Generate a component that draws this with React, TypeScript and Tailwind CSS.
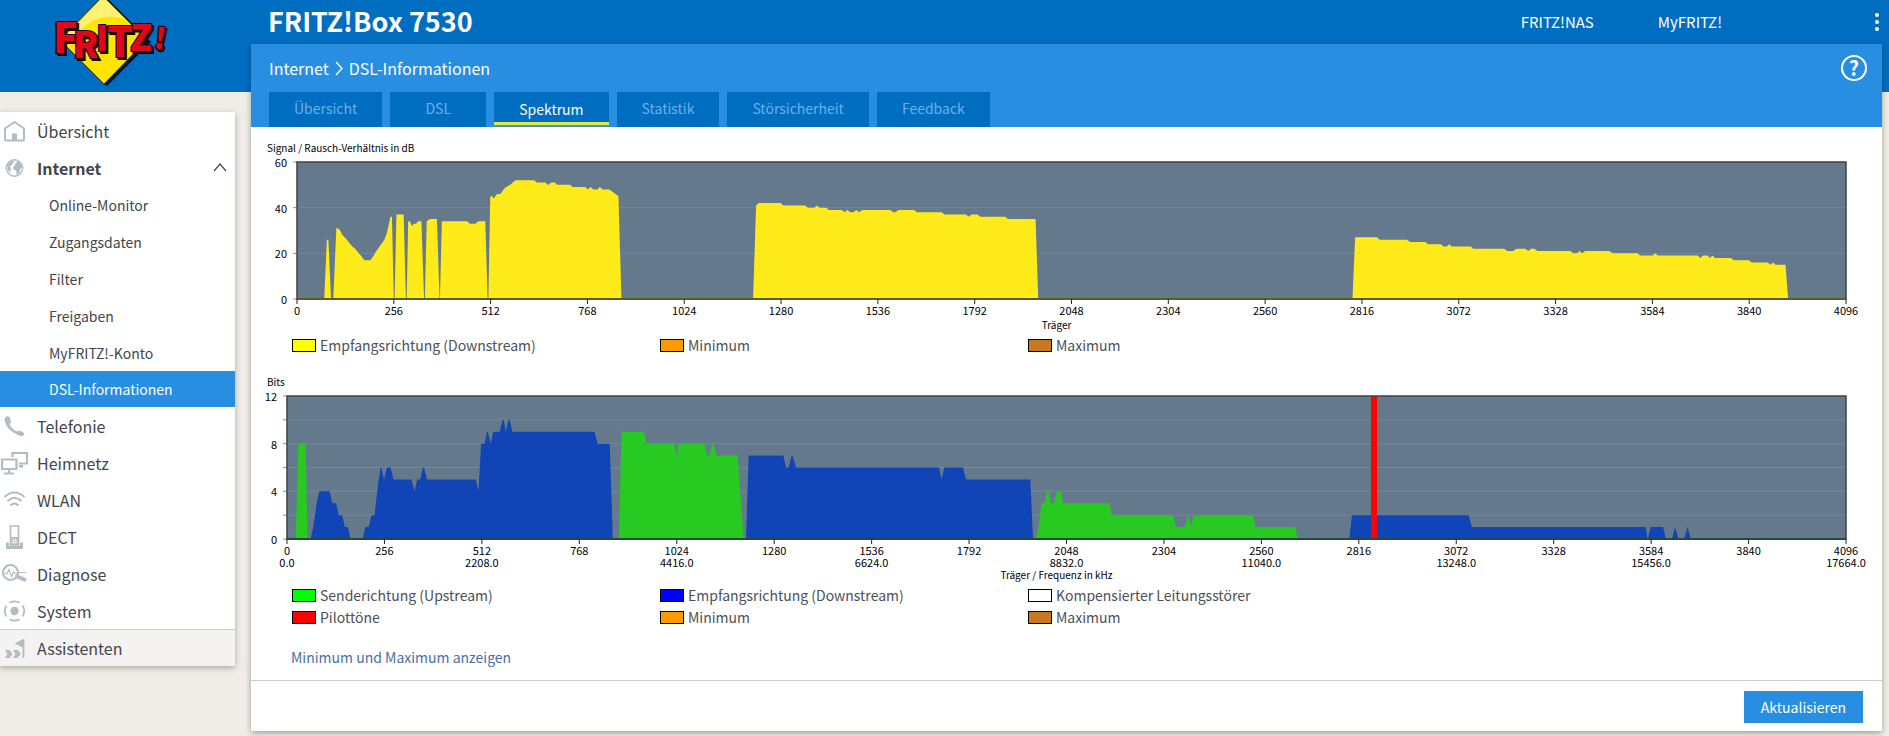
import type { ReactNode } from "react";
import { clsx } from "clsx";

type Point = [carrier: number, value: number];
type Series = { color: string; points: Point[] };
type LegendItem = { label: string; color: string };

const MAX_CARRIER = 4096;

const snr: Series[] = [
  {
    color: "#ffeb1a",
    points: [
      [72, 0], [79, 26], [83, 26], [90, 0], [96, 0], [104, 31], [108, 31], [114, 30], [120, 28], [132, 26],
      [146, 23], [154, 22], [163, 20], [169, 19], [178, 17], [194, 17], [203, 19], [210, 21], [231, 26],
      [238, 29], [247, 36], [251, 36], [256, 0], [258, 0], [263, 37], [282, 37], [288, 0], [290, 0],
      [294, 34], [298, 34], [304, 32], [309, 33], [315, 33], [320, 34], [329, 34], [336, 0], [338, 0],
      [343, 34], [352, 35], [370, 35], [377, 0], [378, 0], [383, 34], [450, 34], [457, 33], [472, 33],
      [479, 34], [498, 34], [504, 0], [506, 0], [511, 45], [516, 45], [520, 44], [529, 46], [538, 46],
      [546, 48], [553, 49], [564, 50], [577, 52], [627, 52], [634, 51], [657, 51], [663, 50], [666, 50],
      [672, 51], [681, 51], [688, 50], [722, 50], [729, 49], [762, 49], [769, 48], [776, 49], [784, 48],
      [794, 48], [801, 49], [808, 48], [826, 48], [850, 45], [858, 0],
    ],
  },
  {
    color: "#ffeb1a",
    points: [
      [1206, 0], [1214, 41], [1221, 42], [1279, 42], [1286, 41], [1344, 41], [1351, 40], [1368, 40],
      [1375, 41], [1382, 40], [1400, 40], [1406, 39], [1441, 39], [1448, 38], [1455, 39], [1463, 38],
      [1471, 38], [1479, 39], [1486, 38], [1495, 39], [1569, 39], [1576, 38], [1583, 38], [1590, 39],
      [1632, 39], [1639, 38], [1705, 38], [1712, 37], [1769, 37], [1776, 36], [1783, 37], [1800, 37],
      [1806, 36], [1873, 36], [1880, 35], [1953, 35], [1960, 0],
    ],
  },
  {
    color: "#ffeb1a",
    points: [
      [2791, 0], [2798, 27], [2856, 27], [2863, 26], [2935, 26], [2943, 25], [2984, 25], [2991, 24],
      [3025, 24], [3031, 23], [3040, 23], [3047, 24], [3053, 23], [3104, 23], [3110, 22], [3192, 22],
      [3200, 21], [3216, 21], [3224, 22], [3248, 22], [3256, 21], [3263, 22], [3272, 22], [3280, 21],
      [3367, 21], [3375, 20], [3385, 20], [3391, 21], [3398, 20], [3407, 21], [3470, 21], [3479, 20],
      [3545, 20], [3551, 19], [3585, 19], [3592, 20], [3598, 19], [3704, 19], [3711, 18], [3718, 19],
      [3730, 19], [3736, 18], [3743, 19], [3750, 18], [3792, 18], [3799, 17], [3839, 17], [3847, 16],
      [3889, 16], [3896, 15], [3903, 16], [3909, 15], [3936, 15], [3943, 0],
    ],
  },
];

const upstream = "#28ca22";
const downstream = "#1044b7";

const bits: Series[] = [
  { color: upstream, points: [[23, 0], [30, 8], [49, 8], [54, 0]] },
  {
    color: downstream,
    points: [
      [62, 0], [69, 1], [78, 3], [85, 4], [112, 4], [119, 3], [129, 3], [136, 2], [145, 2], [152, 1],
      [160, 1], [167, 0], [199, 0], [206, 1], [215, 1], [222, 2], [230, 2], [239, 4.5], [246, 6], [248, 6],
      [255, 5], [262, 6], [272, 6], [280, 5], [327, 5], [335, 4], [342, 5], [350, 5], [357, 6], [360, 6],
      [368, 5], [496, 5], [503, 4], [510, 8], [519, 8], [526, 9], [528, 9], [535, 8], [542, 9], [559, 9],
      [566, 10], [569, 10], [575, 9], [582, 10], [585, 10], [592, 9], [808, 9], [816, 8], [848, 8], [856, 0],
    ],
  },
  {
    color: upstream,
    points: [
      [872, 0], [879, 9], [937, 9], [945, 8], [1018, 8], [1023, 7], [1029, 8], [1097, 8], [1104, 7],
      [1111, 7], [1117, 8], [1121, 8], [1128, 7], [1184, 7], [1200, 0],
    ],
  },
  {
    color: downstream,
    points: [
      [1206, 0], [1213, 7], [1304, 7], [1311, 6], [1318, 6], [1326, 7], [1328, 7], [1337, 6], [1713, 6],
      [1720, 5], [1727, 6], [1776, 6], [1784, 5], [1953, 5], [1960, 0],
    ],
  },
  {
    color: upstream,
    points: [
      [1967, 0], [1975, 1], [1982, 3], [1990, 3], [1997, 4], [2001, 4], [2008, 3], [2014, 3], [2023, 4],
      [2032, 4], [2040, 3], [2161, 3], [2168, 2], [2329, 2], [2336, 1], [2358, 1], [2368, 2], [2376, 1],
      [2382, 2], [2538, 2], [2545, 1], [2649, 1], [2656, 0],
    ],
  },
  {
    color: downstream,
    points: [
      [2791, 0], [2798, 2], [3105, 2], [3113, 1], [3569, 1], [3575, 0], [3583, 1], [3615, 1], [3623, 0],
      [3639, 0], [3647, 1], [3656, 0], [3671, 0], [3680, 1], [3688, 0],
    ],
  },
];

const snrLegend: LegendItem[] = [
  { label: "Empfangsrichtung (Downstream)", color: "bg-[#ffff00]" },
  { label: "Minimum", color: "bg-[#ff9900]" },
  { label: "Maximum", color: "bg-[#c8781e]" },
];

const bitsLegend: LegendItem[] = [
  { label: "Senderichtung (Upstream)", color: "bg-[#00ff00]" },
  { label: "Empfangsrichtung (Downstream)", color: "bg-[#0000ff]" },
  { label: "Kompensierter Leitungsstörer", color: "bg-white" },
  { label: "Pilottöne", color: "bg-[#ff0000]" },
  { label: "Minimum", color: "bg-[#ff9900]" },
  { label: "Maximum", color: "bg-[#c8781e]" },
];

const tabs = ["Übersicht", "DSL", "Spektrum", "Statistik", "Störsicherheit", "Feedback"];

function MenuIcon({ children }: { children: ReactNode }) {
  return (
    <svg
      viewBox="0 0 28 24"
      className="h-6 w-7 shrink-0 fill-none stroke-[#b1bdc3] stroke-2"
      aria-hidden="true"
    >
      {children}
    </svg>
  );
}

const solid = "fill-[#b1bdc3] stroke-none";

const icons = {
  home: (
    <MenuIcon>
      <path d="M5 9.5 14.500 3 24 9.500V20q0 1.500-1.500 1.500H6.500Q5 21.500 5 20Z" strokeLinejoin="round" />
      <path d="M12 22v-7.500h5V22Z" className={solid} />
    </MenuIcon>
  ),
  globe: (
    <MenuIcon>
      <circle cx="14.500" cy="12" r="8.200" strokeWidth="1.500" />
      <path
        d="M7.500 9Q9.500 5.500 13 4.800L14.500 6 12.500 7.500 11.500 9.500 9.500 10 11 12 10.500 14.500 9.500 16.500Q6.800 13 7.500 9ZM16 6.500l2.500-1.500 2.500 3 1 3.500-1.500 1-1 4-2 2.500-1-.5-.3-4-2.400-.8-.8-2.200 1.800-2Z"
        className={solid}
      />
    </MenuIcon>
  ),
  phone: (
    <MenuIcon>
      <path
        d="M6.500 2.500Q9.500 1.500 10.500 5.500T9.500 10Q11.500 14.500 16.500 17.500 18 16 21.500 17.500T24 20.500Q22.500 23 19 21.500 6 16 4.500 6 4.500 3.500 6.500 2.500Z"
        className={solid}
      />
    </MenuIcon>
  ),
  network: (
    <MenuIcon>
      <path d="M12.500 6V2h14.500v10.500h-8" strokeWidth="2.200" />
      <path d="M2 8.500h14.500V18H2ZM9 18v4M4 22.500h10" strokeWidth="2.200" />
      <path d="M19 14h4v2.500h-4Z" className={solid} />
    </MenuIcon>
  ),
  wifi: (
    <MenuIcon>
      <path d="M4.500 9Q14.500 0 24.500 9M7.500 13Q14.500 6.500 21.500 13M10.500 17.500Q14.500 13.500 18.500 17.500" />
    </MenuIcon>
  ),
  dect: (
    <MenuIcon>
      <path d="M10.500 1h8v20h-8Z" strokeWidth="1.600" />
      <path d="M11 12h7v8h-7Z" className={solid} />
      <path d="M13.300 13v6M15.700 13v6M11.500 15.500h6M11.500 17.500h6" className="stroke-white" strokeWidth=".6" />
      <path d="M6 17.500h3V21h11v-3.500h3V24H6Z" className={solid} />
    </MenuIcon>
  ),
  diagnose: (
    <MenuIcon>
      <circle cx="10.500" cy="10.500" r="7.500" />
      <path d="M4.500 11.500h2.500l2-4 2.500 7 2-4.500 1.500 1.500h4M19 10.500h7" strokeWidth="1.200" />
      <path d="m17 14.500 7.500 3" strokeWidth="4" strokeLinecap="round" />
    </MenuIcon>
  ),
  system: (
    <MenuIcon>
      <circle cx="14.500" cy="12" r="4.200" className={solid} />
      <path
        d="M9.500 3.800Q14.500 1 19.500 3.800M9.500 20.200Q14.500 23 19.500 20.200M6.500 6.500Q3 12 6.500 17.500M22.500 6.500Q26 12 22.500 17.500"
        strokeWidth="1.800"
      />
    </MenuIcon>
  ),
  assist: (
    <MenuIcon>
      <path
        d="M5 14h4.500l3 4-3 4H5l2.500-4ZM13 14h4.500l3.500 4-3.500 4H13l2.500-4ZM22.500 3h1.800v19h-1.800ZM23 3v8.500L14.500 7.500Z"
        className={solid}
      />
    </MenuIcon>
  ),
};

const subPages = ["Online-Monitor", "Zugangsdaten", "Filter", "Freigaben", "MyFRITZ!-Konto", "DSL-Informationen"];

const lowerMenu = [
  { label: "Telefonie", icon: icons.phone },
  { label: "Heimnetz", icon: icons.network },
  { label: "WLAN", icon: icons.wifi },
  { label: "DECT", icon: icons.dect },
  { label: "Diagnose", icon: icons.diagnose },
  { label: "System", icon: icons.system },
];

const logoLetters = [
  { char: "F", x: 53, y: 53, size: 41 },
  { char: "R", x: 73, y: 58, size: 36 },
  { char: "I", x: 96, y: 51, size: 35 },
  { char: "T", x: 107, y: 57, size: 41 },
  { char: "Z", x: 130, y: 51, size: 36 },
  { char: "!", x: 153, y: 48, size: 29 },
];

function Logo() {
  return (
    <svg width="180" height="92" viewBox="0 0 180 92" role="img" aria-label="FRITZ!">
      <path d="M106-3 151 42 107 86 104 84Z" className="fill-[#00152e]" />
      <path d="M103-4 147 40 104 84 60 40Z" className="fill-[#ffe500] stroke-[#3a3500]" />
      <path d="M103-3 125 19Q95 10 76 36L62 40Z" className="fill-white/45" />
      {["shadow", "face"].map((layer) => (
        <g
          key={layer}
          className={clsx(
            "font-black stroke-[#1a0505]",
            layer === "shadow" ? "translate-x-[2px] translate-y-[2px] fill-[#1a0505]" : "fill-[#e2061a]",
          )}
          strokeWidth="2"
          paintOrder="stroke"
        >
          {logoLetters.map(({ char, x, y, size }) => (
            <text
              key={char}
              x={x}
              y={y}
              fontSize={size}
              transform={char === "!" ? `rotate(8 ${x} ${y})` : undefined}
            >
              {char}
            </text>
          ))}
        </g>
      ))}
    </svg>
  );
}

function MenuRow({ label, icon, children, className }: {
  label: string;
  icon: ReactNode;
  children?: ReactNode;
  className?: string;
}) {
  return (
    <a href="#" className={clsx("flex h-[37px] items-center text-base", className)}>
      {icon}
      <span className="ml-[9px] flex-1">{label}</span>
      {children}
    </a>
  );
}

function Sidebar() {
  return (
    <nav className="mt-5 w-[235px] bg-white text-[#3f464c] shadow-[0_2px_6px_rgba(0,0,0,0.3)]">
      <MenuRow label="Übersicht" icon={icons.home} />
      <MenuRow label="Internet" icon={icons.globe} className="font-bold">
        <svg width="14" height="9" viewBox="0 0 14 9" className="mr-2 fill-none stroke-[#3f464c]" aria-hidden="true">
          <path d="M1 8 7 1 13 8" strokeWidth="1.200" />
        </svg>
      </MenuRow>
      {subPages.map((page) => (
        <a
          key={page}
          href="#"
          className={clsx(
            "flex items-center pl-[49px] text-sm",
            page === "DSL-Informationen" ? "h-9 bg-[#278ee1] text-white" : "h-[37px]",
          )}
        >
          {page}
        </a>
      ))}
      {lowerMenu.map((item) => (
        <MenuRow key={item.label} {...item} />
      ))}
      <MenuRow label="Assistenten" icon={icons.assist} className="border-t border-[#ccc] bg-[#f4f3f1]" />
    </nav>
  );
}

type ChartProps = {
  title: string;
  caption: string;
  series: Series[];
  max: number;
  step: number;
  labelStep: number;
  plotHeight: number;
  baseline: string;
  pilot?: number;
  showFrequency?: boolean;
  className?: string;
};

function Chart({
  title, caption, series, max, step, labelStep, plotHeight, baseline, pilot, showFrequency, className,
}: ChartProps) {
  const rows = Array.from({ length: max / step + 1 }, (_, i) => i * step);
  const cols = Array.from({ length: 17 }, (_, i) => i * 256);
  const toY = (value: number) => plotHeight - (value / max) * plotHeight;

  return (
    <figure className="text-[10px] leading-4 text-black">
      <h3 className="mb-1.5">{title}</h3>
      <div className={className}>
        <svg
          width="100%"
          height={plotHeight + (showFrequency ? 28 : 18)}
          className="block overflow-visible text-[11px]"
        >
          <rect width="100%" height={plotHeight} fill="#65798d" />
          {rows.map((value) => (
            <g key={value}>
              {value > 0 && value < max && (
                <line x2="100%" y1={toY(value)} y2={toY(value)} stroke="#75879a" />
              )}
              <line x1="-4" x2="0" y1={toY(value)} y2={toY(value)} stroke="#8a8f94" />
              {value % labelStep === 0 && (
                <text x="-10" y={toY(value) + 5} textAnchor="end">
                  {value}
                </text>
              )}
            </g>
          ))}
          <svg width="100%" height={plotHeight} viewBox={`0 0 ${MAX_CARRIER} ${max}`} preserveAspectRatio="none">
            {series.map(({ color, points }) => (
              <polygon
                key={points[0][0]}
                points={points.map(([carrier, value]) => `${carrier},${max - value}`).join(" ")}
                fill={color}
              />
            ))}
            {pilot && <rect x={pilot - 8} width="16" height={max} fill="#fb0404" />}
          </svg>
          <rect width="100%" height={plotHeight} fill="none" stroke="#3a424a" strokeWidth="1.500" />
          <line x2="100%" y1={plotHeight} y2={plotHeight} stroke={baseline} strokeWidth="2" />
          {cols.map((carrier) => {
            const x = `${(carrier / MAX_CARRIER) * 100}%`;
            return (
              <g key={carrier} textAnchor="middle">
                <line x1={x} x2={x} y1={plotHeight} y2={plotHeight + 5} stroke="#222" />
                <text x={x} y={plotHeight + 16}>
                  {carrier}
                </text>
                {showFrequency && carrier % 512 === 0 && (
                  <text x={x} y={plotHeight + 28}>
                    {(carrier * 4.3125).toFixed(1)}
                  </text>
                )}
              </g>
            );
          })}
        </svg>
      </div>
      <figcaption className="text-center">{caption}</figcaption>
    </figure>
  );
}

function Legend({ items }: { items: LegendItem[] }) {
  return (
    <ul className="mt-px ml-[25px] grid max-w-[1104px] grid-cols-3 text-sm leading-[22px] text-[#4b5157]">
      {items.map(({ label, color }) => (
        <li key={label} className="flex items-center gap-1">
          <span className={clsx("h-[13px] w-6 border border-black", color)} />
          {label}
        </li>
      ))}
    </ul>
  );
}

export default function App() {
  return (
    <div className="flex min-h-screen items-start bg-[linear-gradient(#006ec0_92px,#f0ede6_92px)] font-['Noto_Sans_CJK_SC','Noto_Sans',sans-serif]">
      <aside className="w-[251px] shrink-0">
        <a href="#" className="block h-[92px]">
          <Logo />
        </a>
        <Sidebar />
      </aside>
      <div className="min-w-0 flex-1">
        <header className="flex h-11 items-center pl-[17px] text-white">
          <h1 className="flex-1 pb-0.5 text-[27px] leading-8 font-bold">FRITZ!Box 7530</h1>
          <nav className="flex gap-16 text-[15px]">
            <a href="#">FRITZ!NAS</a>
            <a href="#">MyFRITZ!</a>
          </nav>
          <button type="button" aria-label="Menü" className="ml-[153px] flex w-[14px] flex-col items-start gap-[3px]">
            <span className="size-1 rounded-full bg-white" />
            <span className="size-1 rounded-full bg-white" />
            <span className="size-1 rounded-full bg-white" />
          </button>
        </header>
        <main className="mr-[7px] mb-1 bg-white shadow-[0_2px_6px_rgba(0,0,0,0.35)]">
          <div className="bg-[#278ee1] pr-[15px] pl-[18px] text-white">
            <div className="flex h-12 items-center justify-between">
              <div className="flex items-center gap-1.5 text-base">
                <a href="#">Internet</a>
                <svg width="8" height="15" viewBox="0 0 8 15" className="fill-none stroke-white" aria-hidden="true">
                  <path d="M1 1 7 7.500 1 14" strokeWidth="1.300" />
                </svg>
                <h2>DSL-Informationen</h2>
              </div>
              <button
                type="button"
                aria-label="Hilfe"
                className="flex size-[26px] items-center justify-center rounded-full border-2 border-white text-xl leading-none font-bold"
              >
                ?
              </button>
            </div>
            <div className="flex gap-2 text-sm">
              {tabs.map((tab) => (
                <a
                  key={tab}
                  href="#"
                  className={clsx(
                    "flex h-[35px] min-w-24 items-center justify-center bg-[#006ec0] px-[25px]",
                    tab === "Spektrum"
                      ? "border-b-2 border-[#4d8fb5] shadow-[inset_0_-3px_#dcec4a]"
                      : "pb-[3px] text-[#6cb0ea]",
                  )}
                >
                  {tab}
                </a>
              ))}
            </div>
          </div>
          <section className="pt-[13px] pr-9 pb-3 pl-4">
            <Chart
              title="Signal / Rausch-Verhältnis in dB"
              caption="Träger"
              series={snr}
              max={60}
              step={20}
              labelStep={20}
              plotHeight={137}
              baseline="#5b5e24"
              className="pl-[30px]"
            />
            <Legend items={snrLegend} />
            <div className="mt-[18px]">
              <Chart
                title="Bits"
                caption="Träger / Frequenz in kHz"
                series={bits}
                max={12}
                step={2}
                labelStep={4}
                plotHeight={143}
                baseline="#234b39"
                pilot={2856}
                showFrequency
                className="pl-5"
              />
            </div>
            <Legend items={bitsLegend} />
            <a href="#" className="mt-[18px] ml-6 inline-block text-sm leading-[22px] text-[#4a6fa5]">
              Minimum und Maximum anzeigen
            </a>
          </section>
          <footer className="flex justify-end border-t border-[#ccc] pt-[10px] pr-[19px] pb-2">
            <button type="button" className="h-8 bg-[#278ee1] px-[17px] text-sm text-white">
              Aktualisieren
            </button>
          </footer>
        </main>
      </div>
    </div>
  );
}
